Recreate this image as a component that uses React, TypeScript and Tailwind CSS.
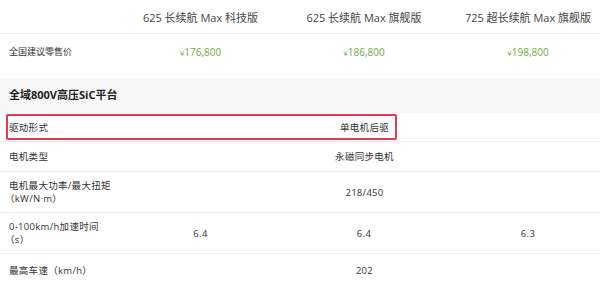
import React from "react";

const font = { fontFamily: '"Open Sans", "Noto Sans CJK SC", sans-serif' };

type Row = { label: React.ReactNode; values: string[] | string; h: string };

const rows: Row[] = [
  { label: "驱动形式", values: "单电机后驱", h: "h-[29px]" },
  { label: "电机类型", values: "永磁同步电机", h: "h-[30px]" },
  {
    label: (
      <>
        电机最大功率/最大扭矩
        <br />
        <span className="-ml-[4px]">（kW/N·m）</span>
      </>
    ),
    values: "218/450",
    h: "h-[41px]",
  },
  {
    label: (
      <>
        0-100km/h加速时间
        <br />
        <span className="-ml-[4px]">（s）</span>
      </>
    ),
    values: ["6.4", "6.4", "6.3"],
    h: "h-[41px]",
  },
  { label: "最高车速（km/h）", values: "202", h: "h-[34px]" },
];

function Price({ v }: { v: string }) {
  return (
    <div className="pt-[11px] text-center text-[#6fa84a]">
      <span className="text-[8px]">¥</span>
      {v}
    </div>
  );
}

export default function App() {
  return (
    <div className="relative w-[600px] h-[281px] overflow-hidden bg-white" style={font}>
      <div className="w-[610px]">
        {/* header */}
        <div className="grid grid-cols-[119px_163px_164px_164px] h-[34px] border-b border-[#f0f0f0] text-[11px] text-[#444]">
          <div />
          <div className="flex items-center justify-center pt-[4px]">625 长续航 Max 科技版</div>
          <div className="flex items-center justify-center pt-[4px]">625 长续航 Max 旗舰版</div>
          <div className="flex items-center justify-center pt-[4px]">725 超长续航 Max 旗舰版</div>
        </div>
        {/* price */}
        <div className="grid grid-cols-[119px_163px_164px_164px] h-[44px] text-[10px] leading-[14px]">
          <div className="pl-[9px] pt-[11px] text-[#333] text-[9px]">全国建议零售价</div>
          <Price v="176,800" />
          <Price v="186,800" />
          <Price v="198,800" />
        </div>
        {/* section */}
        <div className="h-[35px] bg-[#f7f7f7] flex items-center pl-[9px] text-[11px] font-bold text-[#222]">
          全域800V高压SiC平台
        </div>
        {rows.map((r, i) => (
          <div
            key={i}
            className={`grid grid-cols-[119px_163px_164px_164px] ${r.h} border-b border-[#eeeeee] text-[9.5px] leading-[13px] text-[#333] tracking-[0.3px]`}
          >
            <div className="pl-[9px] flex items-center">
              <div>{r.label}</div>
            </div>
            {typeof r.values === "string" ? (
              <div className="col-span-3 flex items-center justify-center">{r.values}</div>
            ) : (
              r.values.map((v, j) => (
                <div key={j} className="flex items-center justify-center">
                  {v}
                </div>
              ))
            )}
          </div>
        ))}
      </div>
      <div className="absolute left-[6px] top-[114px] w-[391px] h-[26px] border-2 border-[#e6384f] rounded-[2px]" />
    </div>
  );
}
